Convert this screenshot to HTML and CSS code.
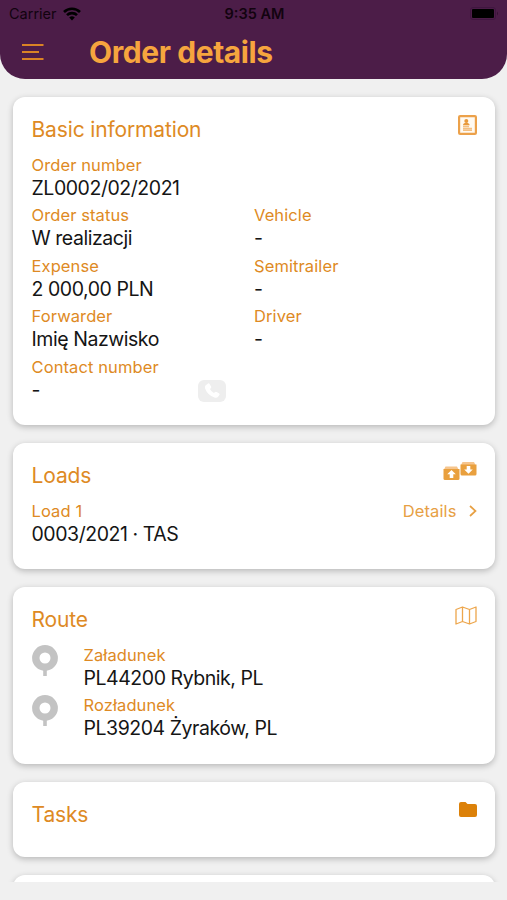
FILE: index.html
```html
<!DOCTYPE html>
<html lang="en">
<head>
<meta charset="utf-8">
<title>Order details</title>
<link rel="stylesheet" href="styles.css">
</head>
<body>
<header class="header">
  <div class="status">
    <div class="carrier"><span>Carrier</span>
      <svg width="18" height="14" viewBox="0 0 18 14" fill="none" stroke="#000" stroke-width="2.6"><path d="M1 5a11.3 11.3 0 0 1 16 0M4 8.200a7 7 0 0 1 10 0"/><path d="M6.200 10.500a4 4 0 0 1 5.600 0L9 13.500z" fill="#000" stroke="none"/></svg>
    </div>
    <span class="time">9:35 AM</span>
    <svg class="battery" width="30" height="13" viewBox="0 0 30 13"><rect x=".5" y=".5" width="25" height="12" rx="2.500" fill="none" stroke="#401640"/><rect x="2" y="2" width="22" height="9" rx="1"/><path d="M27 4.500q2 2 0 4z" fill="#351132"/></svg>
  </div>
  <div class="bar">
    <svg width="22" height="16" viewBox="0 0 22 16" fill="none" stroke="#d98325" stroke-width="2"><path d="M0 1h21.500M0 8h17M0 15h21.500"/></svg>
    <h1>Order details</h1>
  </div>
</header>
<main class="content">
  <section class="card">
    <div class="card-head"><h2>Basic information</h2>
      <svg class="icon-id" width="19" height="20" viewBox="0 0 19 20"><rect x="1.100" y="1.100" width="16.800" height="17.800" rx="1" fill="#fffaf2" stroke="#eca14a" stroke-width="2.200"/><circle cx="8.300" cy="6" r="2" fill="#e99a3c"/><path d="M5 10.300q0-2.600 3.300-2.600t3.300 2.600z" fill="#e99a3c"/><path d="M5 11.500h6M5 13.500h9M5 15.200h9" stroke="#f3bf82" stroke-width="1.500"/></svg>
    </div>
    <div class="grid">
      <div class="field wide"><span class="label">Order number</span><span class="value">ZL0002/02/2021</span></div>
      <div class="field"><span class="label">Order status</span><span class="value">W realizacji</span></div>
      <div class="field"><span class="label">Vehicle</span><span class="value">-</span></div>
      <div class="field"><span class="label">Expense</span><span class="value">2 000,00 PLN</span></div>
      <div class="field"><span class="label">Semitrailer</span><span class="value">-</span></div>
      <div class="field"><span class="label">Forwarder</span><span class="value">Imię Nazwisko</span></div>
      <div class="field"><span class="label">Driver</span><span class="value">-</span></div>
      <div class="field contact"><span class="label">Contact number</span>
        <div class="contact-row"><span class="value">-</span>
          <span class="call"><svg width="18" height="18" viewBox="0 0 18 18"><path d="M2.500 3.500 5 1.500q1-.5 1.600.5l1.500 2.500q.5 1-.3 1.700l-.9.9q1.300 2.600 4 4l.9-.9q.8-.8 1.800-.3l2.300 1.400q1.200.8.500 1.800l-1.500 2q-1.200 1.200-3.500.4Q4.500 13 2.100 6.500 1.600 4.600 2.500 3.500z" fill="#fff"/></svg></span>
        </div>
      </div>
    </div>
  </section>
  <section class="card">
    <div class="card-head"><h2>Loads</h2>
      <svg class="icon-loads" width="34" height="20" viewBox="0 0 34 20"><path d="M2.500 5.500h11.500l1.500 3H1z" fill="#f6c58d"/><path d="M.5 8h16v9.500q0 1.500-1.500 1.500H2q-1.500 0-1.500-1.500z" fill="#e9a03e"/><path d="M8.500 9l4.300 4.200h-2.500V17H6.700v-3.800H4.200z" fill="#fff"/><path d="M19.500 1h11.500l1.500 3H18z" fill="#f6c58d"/><path d="M17.500 3.500h16V13q0 1.500-1.500 1.500H19q-1.500 0-1.500-1.500z" fill="#e9a03e"/><path d="M25.500 12.800l4.300-4.200h-2.500V5h-3.600v3.600h-2.500z" fill="#fff"/></svg>
    </div>
    <div class="load">
      <div class="field"><span class="label">Load 1</span><span class="value">0003/2021 · TAS</span></div>
      <div class="details"><span>Details</span><svg width="8" height="12" viewBox="0 0 8 12" fill="none" stroke="#e7a044" stroke-width="1.700"><path d="M1 1l5.500 5L1 11"/></svg></div>
    </div>
  </section>
  <section class="card">
    <div class="card-head"><h2>Route</h2>
      <svg class="icon-map" width="22" height="19" viewBox="0 0 22 19" fill="none" stroke="#eda64c" stroke-width="1.300" stroke-linejoin="round"><path d="M1 3.500 7.500 1l7 2.500L21 1v14.500L14.500 18l-7-2.500L1 18zM7.500 1v14.500M14.500 3.500V18"/></svg>
    </div>
    <div class="stop"><svg class="pin" width="26" height="32" viewBox="0 0 26 32"><circle cx="13" cy="13" r="9.200" fill="none" stroke="#c3c3c3" stroke-width="7.400"/><path d="M13 24v7" stroke="#c3c3c3" stroke-width="3.600"/></svg>
      <div class="field"><span class="label">Załadunek</span><span class="value">PL44200 Rybnik, PL</span></div></div>
    <div class="stop"><svg class="pin" width="26" height="32" viewBox="0 0 26 32"><circle cx="13" cy="13" r="9.200" fill="none" stroke="#c3c3c3" stroke-width="7.400"/><path d="M13 24v7" stroke="#c3c3c3" stroke-width="3.600"/></svg>
      <div class="field"><span class="label">Rozładunek</span><span class="value">PL39204 Żyraków, PL</span></div></div>
  </section>
  <section class="card">
    <div class="card-head"><h2>Tasks</h2>
      <svg class="icon-folder" width="18" height="15" viewBox="0 0 18 15"><path d="M2 0h4.500l2 2H16q2 0 2 2v9q0 2-2 2H2q-2 0-2-2V2Q0 0 2 0z" fill="#dc8109"/></svg>
    </div>
  </section>
  <section class="card"></section>
</main>
</body>
</html>
```

FILE: styles.css
```css
* { box-sizing: border-box; }
body { margin: 0; height: 900px; overflow: hidden; background: #f0f0f0; font-family: Inter, "Liberation Sans", sans-serif; color: #151515; }
svg { display: block; flex: none; }
.header { height: 79px; background: #4c1d48; border-radius: 0 0 25px 25px; }
.status { height: 27px; padding: 0 7px 0 9px; display: grid; grid-template-columns: 1fr auto 1fr; align-items: center; font-size: 14.5px; color: #12030f; }
.carrier { display: flex; align-items: center; gap: 6px; }
.time { font-weight: 600; }
.battery { justify-self: end; }
.bar { display: flex; align-items: center; height: 50px; padding-left: 22px; gap: 45px; }
h1 { margin: 0; font-size: 30px; font-weight: 700; letter-spacing: -.42px; color: #f6a53e; }
.content { height: 803px; padding: 18.300px 12px 0 13px; display: flex; flex-direction: column; gap: 18px; overflow: hidden; }
.card { flex: none; min-height: 60px; padding: 18px 18.500px 18.250px 18.500px; background: #fff; border-radius: 12px; box-shadow: 0 2px 6px rgba(0,0,0,.24); }
.card-head { height: 28px; margin-bottom: 11.250px; display: flex; justify-content: space-between; align-items: flex-start; }
h2 { margin: 0; font-size: 21px; line-height: 30px; font-weight: 400; letter-spacing: -.14px; color: #de8a24; }
.grid { display: grid; grid-template-columns: 222.500px 1fr; }
.wide, .contact { grid-column: 1 / -1; }
.field { height: 50.500px; display: flex; flex-direction: column; white-space: nowrap; }
.label { font-size: 16.500px; line-height: 20px; letter-spacing: .1px; color: #de8a24; }
.value { font-size: 19.500px; line-height: 26px; letter-spacing: -.45px; }
.contact-row { width: 194px; display: flex; justify-content: space-between; }
.call { width: 28px; height: 22px; margin-top: 3px; display: flex; align-items: center; justify-content: center; background: #eee; border-radius: 6px; }
.load, .stop { display: flex; justify-content: space-between; }
.stop { justify-content: flex-start; gap: 26px; }
.details { height: 20px; display: flex; align-items: center; gap: 12px; font-size: 16.500px; letter-spacing: .12px; color: #e7a044; }
.icon-map { margin-top: 1px; }
.icon-folder { margin-top: 2px; }
```
